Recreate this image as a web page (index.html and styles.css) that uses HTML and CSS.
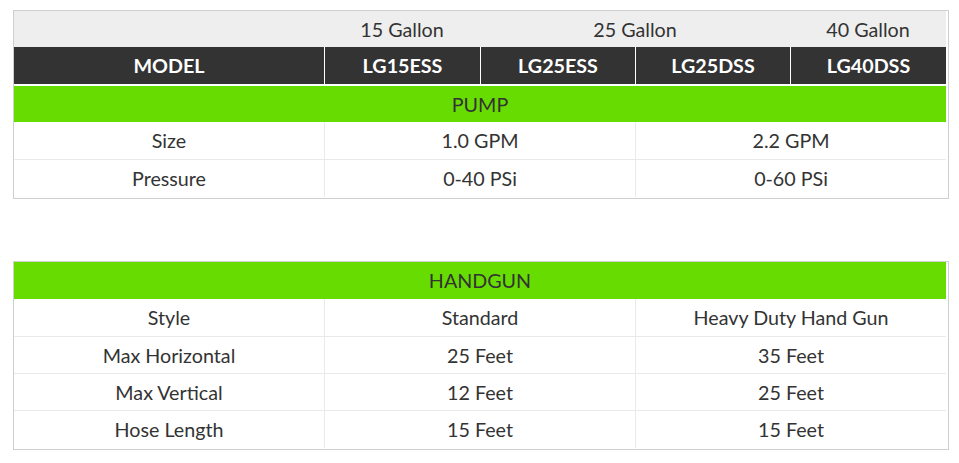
FILE: index.html
```html
<!DOCTYPE html>
<html>
<head>
<meta charset="utf-8">
<link rel="stylesheet" href="styles.css">
</head>
<body>
<div class="spec spec-pump">
  <table class="grid">
    <colgroup>
      <col class="c-label"><col class="c-a"><col class="c-b"><col class="c-b"><col class="c-a">
    </colgroup>
    <tr class="gallons">
      <td></td>
      <td>15 Gallon</td>
      <td colspan="2">25 Gallon</td>
      <td>40 Gallon</td>
    </tr>
    <tr class="models">
      <th>MODEL</th>
      <th>LG15ESS</th>
      <th>LG25ESS</th>
      <th>LG25DSS</th>
      <th>LG40DSS</th>
    </tr>
    <tr class="section">
      <td colspan="5">PUMP</td>
    </tr>
    <tr class="data">
      <td>Size</td>
      <td class="sep" colspan="2">1.0 GPM</td>
      <td class="sep" colspan="2">2.2 GPM</td>
    </tr>
    <tr class="data last">
      <td>Pressure</td>
      <td class="sep" colspan="2">0-40 PSi</td>
      <td class="sep" colspan="2">0-60 PSi</td>
    </tr>
  </table>
</div>

<div class="spec spec-gun">
  <table class="grid">
    <colgroup>
      <col class="c-label"><col class="c-a"><col class="c-b"><col class="c-b"><col class="c-a">
    </colgroup>
    <tr class="section">
      <td colspan="5">HANDGUN</td>
    </tr>
    <tr class="data">
      <td>Style</td>
      <td class="sep" colspan="2">Standard</td>
      <td class="sep" colspan="2">Heavy Duty Hand Gun</td>
    </tr>
    <tr class="data">
      <td>Max Horizontal</td>
      <td class="sep" colspan="2">25 Feet</td>
      <td class="sep" colspan="2">35 Feet</td>
    </tr>
    <tr class="data">
      <td>Max Vertical</td>
      <td class="sep" colspan="2">12 Feet</td>
      <td class="sep" colspan="2">25 Feet</td>
    </tr>
    <tr class="data last">
      <td>Hose Length</td>
      <td class="sep" colspan="2">15 Feet</td>
      <td class="sep" colspan="2">15 Feet</td>
    </tr>
  </table>
</div>
</body>
</html>
```

FILE: styles.css
```css
html, body {
  margin: 0;
  padding: 0;
  background: #fff;
}

body {
  padding: 10px 0 0 13px;
  font-family: Lato, "Open Sans", "Liberation Sans", sans-serif;
  font-size: 19.7px;
  line-height: 1.2;
  color: #333;
}

.spec {
  width: 933px;
  border: 1px solid #cfcfcf;
  padding: 0 1px 1px 0;
  box-sizing: content-box;
}

.spec-gun {
  margin-top: 62px;
}

.grid {
  width: 932px;
  table-layout: fixed;
  border-collapse: separate;
  border-spacing: 0;
}

.c-label { width: 310px; }
.c-a { width: 156px; }
.c-b { width: 155px; }

.grid td, .grid th {
  padding: 1px 0 0;
  text-align: center;
  vertical-align: middle;
  box-sizing: border-box;
  overflow: hidden;
  white-space: nowrap;
}

.gallons td {
  background: #eeeeee;
  height: 36px;
  font-weight: 400;
}

.models th {
  background: #333333;
  color: #fff;
  font-weight: 700;
  height: 38px;
  border-bottom: 1px solid #fff;
}

.models th + th {
  border-left: 1px solid #fff;
}

.section td {
  background: #66dc00;
  color: #333;
  height: 37px;
  border-top: 1px solid #fff;
}

.spec-gun .section td {
  border-top: 0;
  height: 37px;
}

.data td {
  height: 37px;
  border-bottom: 1px solid #e9e9e9;
}

.section + .data td {
  height: 38px;
}

.data.last td {
  height: 37px;
  border-bottom: 0;
}

.data td.sep {
  border-left: 1px solid #e9e9e9;
}
```
